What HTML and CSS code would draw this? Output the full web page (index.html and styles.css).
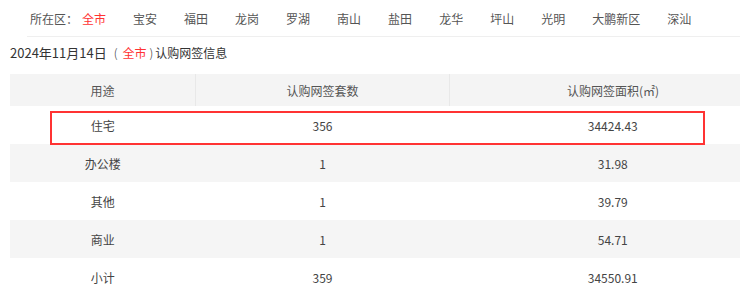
FILE: index.html
```html
<!DOCTYPE html>
<html lang="zh-CN">
<head>
<meta charset="utf-8">
<title>认购网签信息</title>
<link rel="stylesheet" href="styles.css">
</head>
<body>
<div class="nav">
  <span class="nav-label">所在区：</span>
  <span class="nav-item active">全市</span>
  <span class="nav-item">宝安</span>
  <span class="nav-item">福田</span>
  <span class="nav-item">龙岗</span>
  <span class="nav-item">罗湖</span>
  <span class="nav-item">南山</span>
  <span class="nav-item">盐田</span>
  <span class="nav-item">龙华</span>
  <span class="nav-item">坪山</span>
  <span class="nav-item">光明</span>
  <span class="nav-item">大鹏新区</span>
  <span class="nav-item">深汕</span>
</div>
<div class="title"><span class="date">2024年11月14日</span><span class="paren-open">(</span><span class="red">全市</span><span class="paren-close">)</span><span class="caption">认购网签信息</span></div>
<div class="table-wrap">
  <table class="data">
    <thead>
      <tr><th class="c1">用途</th><th class="c2">认购网签套数</th><th class="c3">认购网签面积(㎡)</th></tr>
    </thead>
    <tbody>
      <tr><td>住宅</td><td>356</td><td>34424.43</td></tr>
      <tr><td>办公楼</td><td>1</td><td>31.98</td></tr>
      <tr><td>其他</td><td>1</td><td>39.79</td></tr>
      <tr><td>商业</td><td>1</td><td>54.71</td></tr>
      <tr><td>小计</td><td>359</td><td>34550.91</td></tr>
    </tbody>
  </table>
  <div class="highlight"></div>
</div>
</body>
</html>
```
FILE: styles.css
```css
html, body {
  margin: 0;
  padding: 0;
  overflow: hidden;
  background: #fff;
}
body {
  font-family: "Noto Sans CJK SC", "Microsoft YaHei", sans-serif;
  color: #444;
  font-size: 12px;
}
.nav {
  display: flex;
  align-items: center;
  height: 36px;
  margin-left: 27px;
  padding-left: 3px;
  border-bottom: 1px solid #efefef;
  white-space: nowrap;
}
.nav-label {
  color: #555;
  margin-right: 4px;
}
.nav-item {
  color: #555;
  margin-right: 27px;
}
.nav-item.active {
  color: #f33;
}
.title {
  margin-top: 6px;
  padding-left: 10px;
  font-size: 12px;
  line-height: 20px;
  color: #333;
  white-space: nowrap;
}
.date {
  font-size: 13px;
}
.paren-open {
  margin-left: 7px;
  margin-right: 5px;
  font-weight: 300;
}
.paren-close {
  margin-left: 3px;
  margin-right: 2px;
  font-weight: 300;
}
.red {
  color: #f33;
}
.table-wrap {
  position: relative;
  margin-top: 11px;
  margin-left: 10px;
  width: 764px;
}
.data {
  width: 764px;
  border-collapse: collapse;
  table-layout: fixed;
}
.data th {
  height: 32px;
  padding: 0;
  font-weight: normal;
  background: #f4f4f4;
  color: #555;
  border-right: 1px solid #e8e8e8;
  text-align: center;
}
.data th:last-child {
  border-right: none;
}
.data .c1 { width: 185px; }
.data .c2 { width: 253px; }
.data .c3 { width: 326px; }
.data td {
  height: 38px;
  padding: 0;
  text-align: center;
  color: #444;
}
.data tbody tr:nth-child(even) td {
  background: #f5f5f5;
}
.highlight {
  position: absolute;
  left: 40px;
  top: 37px;
  width: 651px;
  height: 30px;
  border: 2px solid #f33;
  pointer-events: none;
}
```
